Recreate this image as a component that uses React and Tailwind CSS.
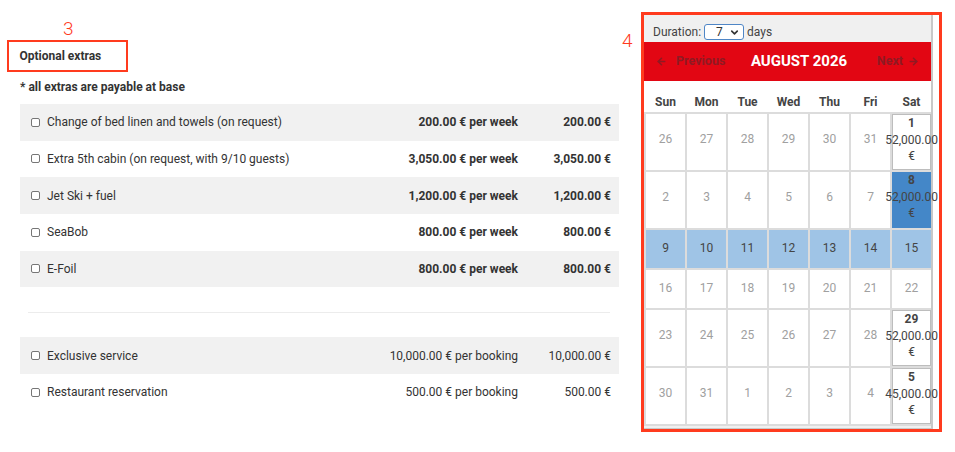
import React from 'react';
import { ArrowLeft, ArrowRight, ChevronDown } from 'lucide-react';

const extras = [
  { label: 'Change of bed linen and towels (on request)', price: '200.00 € per week', total: '200.00 €' },
  { label: 'Extra 5th cabin (on request, with 9/10 guests)', price: '3,050.00 € per week', total: '3,050.00 €' },
  { label: 'Jet Ski + fuel', price: '1,200.00 € per week', total: '1,200.00 €' },
  { label: 'SeaBob', price: '800.00 € per week', total: '800.00 €' },
  { label: 'E-Foil', price: '800.00 € per week', total: '800.00 €' },
];

const services = [
  { label: 'Exclusive service', price: '10,000.00 € per booking', total: '10,000.00 €' },
  { label: 'Restaurant reservation', price: '500.00 € per booking', total: '500.00 €' },
];

const days = ['Sun', 'Mon', 'Tue', 'Wed', 'Thu', 'Fri', 'Sat'];

// each week: plain dates for Sun-Fri, Saturday may carry a weekly rate
const weeks = [
  { dates: [26, 27, 28, 29, 30, 31], sat: { day: 1, rate: '52,000.00' } },
  { dates: [2, 3, 4, 5, 6, 7], sat: { day: 8, rate: '52,000.00', selected: true } },
  { dates: [9, 10, 11, 12, 13, 14, 15], range: true },
  { dates: [16, 17, 18, 19, 20, 21, 22] },
  { dates: [23, 24, 25, 26, 27, 28], sat: { day: 29, rate: '52,000.00' } },
  { dates: [30, 31, 1, 2, 3, 4], sat: { day: 5, rate: '45,000.00' } },
];

const Checkbox = () => (
  <span className="inline-block w-[9px] h-[9px] shrink-0 border border-[#767676] rounded-[2px] bg-white" />
);

const ExtraRow = ({ item, index, bold }) => (
  <div
    className={`flex items-center h-[36.67px] pl-[11px] pr-[8px] ${index % 2 === 0 ? 'bg-[#f1f1f1]' : 'bg-white'}`}
  >
    <Checkbox />
    <span className="ml-[7px] flex-1">{item.label}</span>
    <span className={`text-right ${bold ? 'font-bold' : ''}`}>{item.price}</span>
    <span className={`w-[93px] text-right ${bold ? 'font-bold' : ''}`}>{item.total}</span>
  </div>
);

const Calendar = () => (
  <div className="w-[289px] bg-[#f0f0f0] border-r-2 border-b border-[#c8c8c8] pb-[2px] text-[12px] text-[#444]">
    <div className="h-[27px] pt-[7px] pl-[9px] flex items-center">
      <span>Duration:</span>
      <span className="ml-[3px] w-[40px] h-[16px] bg-white border border-[#4f86c6] rounded-[3px] flex items-center justify-between pl-[11px] pr-[3px] text-[#333]">
        7
        <ChevronDown size={11} strokeWidth={3.5} />
      </span>
      <span className="ml-[3px]">days</span>
    </div>
    <div className="h-[39px] bg-[#e20613] flex items-center text-[12.5px]">
      <span className="w-[97px] pl-[12px] flex items-center gap-[9px] text-[#8f1a23] font-bold">
        <ArrowLeft size={11} strokeWidth={3.5} />
        Previous
      </span>
      <span className="flex-1 text-center text-white font-bold text-[15px]">AUGUST 2026</span>
      <span className="w-[74px] pr-[12px] flex items-center justify-end gap-[5px] text-[#8f1a23] font-bold">
        Next
        <ArrowRight size={11} strokeWidth={3.5} />
      </span>
    </div>
    <div className="h-[31px] bg-white grid grid-cols-7 pl-[2px] gap-x-[2px] items-end pb-[1px] font-bold">
      {days.map((d) => (
        <span key={d} className="text-center">{d}</span>
      ))}
    </div>
    <div className="grid grid-cols-7 gap-[2px] pl-[2px] pt-[2px] pb-[2px] bg-[#dcdcdc]">
      {weeks.map((week, wi) => {
        const tall = Boolean(week.sat);
        return (
          <React.Fragment key={wi}>
            {week.dates.map((d, di) => (
              <div
                key={di}
                className={`flex items-center justify-center ${tall ? 'h-[56px] pb-[7px]' : 'h-[38px] pb-[3px]'} ${
                  week.range ? 'bg-[#9fc4e6] text-[#444]' : 'bg-white text-[#a0a0a0]'
                }`}
              >
                {d}
              </div>
            ))}
            {week.sat && (
              <div
                className={`h-[56px] flex flex-col items-center leading-[16.5px] text-[#444] whitespace-nowrap ${
                  week.sat.selected ? 'bg-[#4487c8]' : 'bg-white border border-[#bdbdbd]'
                }`}
              >
                <span className="font-bold">{week.sat.day}</span>
                <span>{week.sat.rate}</span>
                <span>€</span>
              </div>
            )}
          </React.Fragment>
        );
      })}
    </div>
  </div>
);

export default function App() {
  return (
    <div className="w-[955px] h-[452px] bg-white flex items-start font-['Roboto',sans-serif] text-[12px] text-[#333]">
      <div className="ml-[20px] w-[599px] pt-[20px]">
        <div className="h-[18px] leading-[18px] pl-[43px] text-[19px] font-light text-[#ff3b1e]">3</div>
        <div className="mt-[2px] -ml-[13px] w-[121px] h-[32px] border-[2.5px] border-[#ff3b1e] flex items-center pl-[10.5px] font-bold">
          Optional extras
        </div>
        <div className="h-[32px] flex items-center pb-[2px] font-bold">* all extras are payable at base</div>
        <div>
          {extras.map((item, i) => (
            <ExtraRow key={item.label} item={item} index={i} bold />
          ))}
        </div>
        <div className="mt-[24.7px] mb-[24.4px] ml-[8px] mr-[9px] h-px bg-[#ececec]" />
        <div>
          {services.map((item, i) => (
            <ExtraRow key={item.label} item={item} index={i} />
          ))}
        </div>
      </div>
      <div className="w-[22px] mt-[32px] pl-[3px] h-[18px] leading-[18px] text-[19px] font-light text-[#ff3b1e]">4</div>
      <div className="mt-[12px] border-[3px] border-[#ff3b1e] pr-[6px]">
        <Calendar />
      </div>
    </div>
  );
}
